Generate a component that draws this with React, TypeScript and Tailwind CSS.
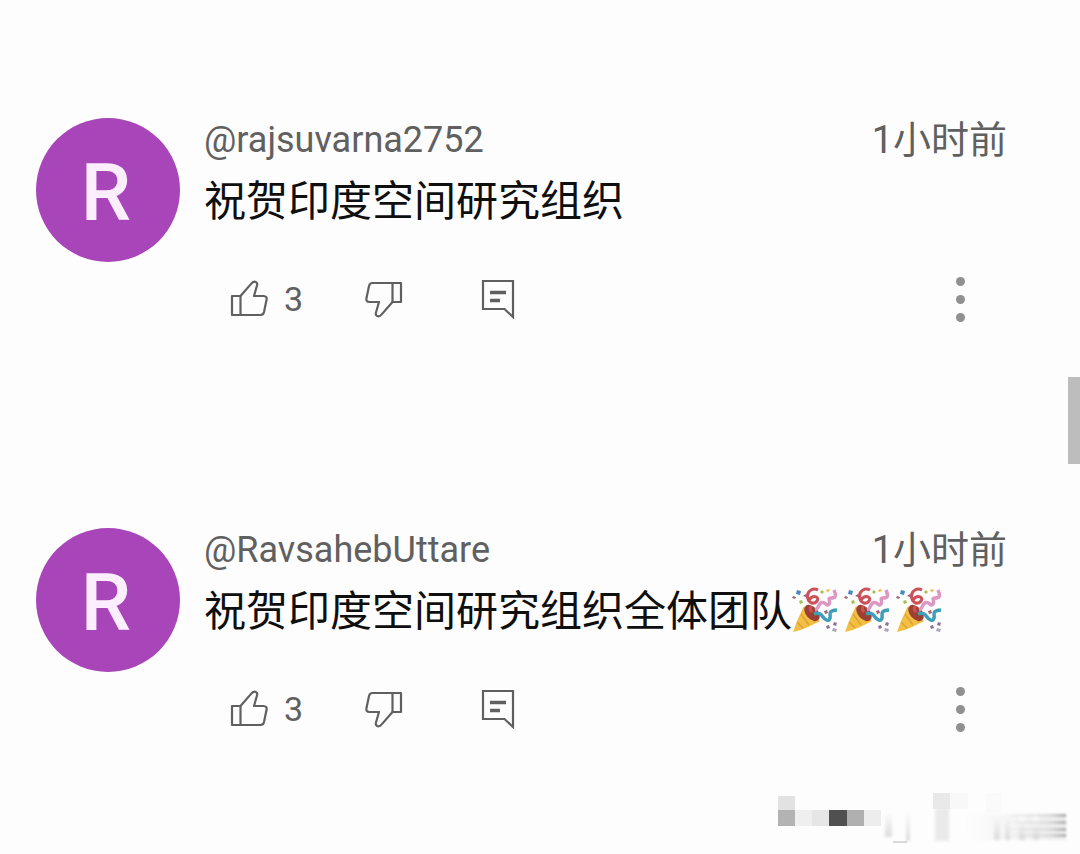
import React, { useState } from 'react';

interface Comment {
  id: number;
  author: string;
  text: string;
  cheers: number;
  time: string;
  likes: number;
}

const comments: Comment[] = [
  {
    id: 1,
    author: '@rajsuvarna2752',
    text: '祝贺印度空间研究组织',
    cheers: 0,
    time: '1小时前',
    likes: 3
  },
  {
    id: 2,
    author: '@RavsahebUttare',
    text: '祝贺印度空间研究组织全体团队',
    cheers: 3,
    time: '1小时前',
    likes: 3
  }
];

const ThumbIcon: React.FC<{ className?: string }> = ({ className = '' }) => (
  <svg
    viewBox="0 0 38 38"
    className={`h-[38px] w-[38px] ${className}`}
    fill="none"
    stroke="currentColor"
    strokeWidth="2.2"
    strokeLinejoin="round"
  >
    <path d="M2 16H10.500V35H2z" />
    <path d="M10.500 16 21.300 3.600Q23.500 1 25.800 1.900 27.800 2.800 27 5.500L24 16H33.500Q37.200 16.300 36.600 19.500L34 32Q33.300 35 30.500 35H10.500" />
  </svg>
);

const ReplyIcon: React.FC = () => (
  <svg viewBox="0 0 34 40" className="h-10 w-[34px]" fill="none" stroke="currentColor" strokeWidth="2.2">
    <path d="M2 2H32V38L23.500 30H2Z" />
    <path d="M9 13.500H25M9 21.500H19" strokeWidth="3.500" />
  </svg>
);

const PartyPopper: React.FC = () => (
  <svg viewBox="0 0 46 46" className="h-[46px] w-[46px]" role="img" aria-label="🎉" fill="none">
    <path d="M12 19C8 27 4 36 1 45 10 43 19 39 28 34Z" fill="#f2bf45" />
    <path d="M9 27l8 11M5 35l6 6M12 21l11 14" stroke="#dfa236" strokeWidth="1.500" />
    <ellipse cx="20" cy="26" rx="6" ry="9.500" transform="rotate(-42 20 26)" fill="#9c4034" />
    <path d="M26 3C21 0 15 4 15.500 10S22 18 25 14 21 7 17 13" stroke="#cb5259" strokeWidth="3" />
    <path d="M20 25C18 23 18 21 19 19" stroke="#cb5259" strokeWidth="3" />
    <path d="M23 23C27 22 26 16 30 15.500S35 20 37 17 35 11 39 11 45 10 42 3" stroke="#dc97c3" strokeWidth="3.500" />
    <path d="M22 27C27 25 29 27 31 30S37 35 38 31 35 24 45 23" stroke="#3f9fba" strokeWidth="3.500" />
    <path d="M5 3l4 1-1 4-4-1z" fill="#4b88bd" />
    <path d="M1 9l3 1-1 2-3-1zM32 24l3-1 1 3-3 1z" fill="#a6636c" />
    <path d="M7 14l3-1 1 3-3 1zM28 5l2-2 2 2-2 2z" fill="#a8bd55" />
    <path d="M11 9l3-2v3z" fill="#865aa0" />
    <path d="M34 3l3-1 1 2-3 1z" fill="#e5c04c" />
    <path d="M34 39l3-1 1 3-3 1zM42 35l3 1-1 3-3-1z" fill="#8d7295" />
    <path d="M41 41l4 1-1 3-4-1z" fill="#b0a3bb" />
  </svg>
);

const CommentRow: React.FC<{ comment: Comment }> = ({ comment }) => {
  const [likes, setLikes] = useState(comment.likes);

  return (
    <li className="flex items-start gap-6">
      <div className="flex h-36 w-36 shrink-0 items-center justify-center rounded-full bg-[#a846b9] pt-1.5 pr-1 text-[80px] leading-none font-medium text-[#fdeeff]">
        R
      </div>
      <div className="min-w-0 flex-1">
        <div className="flex items-center justify-between leading-[44px] text-[#606060]">
          <a href="#author" className="text-[36px] leading-[42px]">{comment.author}</a>
          <time className="text-[38px]">{comment.time}</time>
        </div>
        <p className="mt-[10px] flex items-center text-[42px] leading-[60px] text-[#0f0f0f]">
          {comment.text}
          {comment.cheers > 0 && (
            <span className="flex gap-[6px] pb-1">
              {Array.from({ length: comment.cheers }, (_, i) => (
                <PartyPopper key={i} />
              ))}
            </span>
          )}
        </p>
        <div className="mt-[42px] flex items-center pr-9 pl-[26px] text-[#606060]">
          <button
            type="button"
            aria-label="Like"
            onClick={() => setLikes(likes + 1)}
            className="flex w-[135px] items-center gap-4 text-[34px] leading-[50px]"
          >
            <ThumbIcon />
            <span>{likes}</span>
          </button>
          <button type="button" aria-label="Dislike" className="mr-[78px]">
            <ThumbIcon className="rotate-180" />
          </button>
          <button type="button" aria-label="Reply">
            <ReplyIcon />
          </button>
          <button
            type="button"
            aria-label="More"
            className="ml-auto flex w-[22px] flex-col items-center gap-[9px]"
          >
            <span className="h-[9px] w-[9px] rounded-full bg-[#909090]" />
            <span className="h-[9px] w-[9px] rounded-full bg-[#909090]" />
            <span className="h-[9px] w-[9px] rounded-full bg-[#909090]" />
          </button>
        </div>
      </div>
    </li>
  );
};

// Pixelated strip that covers the account name
const MosaicStrip: React.FC = () => (
  <svg viewBox="0 0 300 54" className="h-[54px] w-[300px]" aria-hidden="true">
    <defs>
      <linearGradient id="fade" x1="0" x2="1" y1="0" y2="0">
        <stop offset="0" stopColor="#fdfdfd" />
        <stop offset="1" stopColor="#ebebeb" />
      </linearGradient>
      <linearGradient id="streak" gradientUnits="userSpaceOnUse" x1="225" x2="290" y1="0" y2="0">
        <stop offset="0" stopColor="#b8b8b8" stopOpacity="0" />
        <stop offset="0.7" stopColor="#b8b8b8" stopOpacity="0.3" />
        <stop offset="1" stopColor="#a8a8a8" />
      </linearGradient>
      <linearGradient id="bar" x1="0" x2="0" y1="0" y2="1">
        <stop offset="0" stopColor="#fdfdfd" />
        <stop offset="1" stopColor="#dcdcdc" />
      </linearGradient>
      <filter id="soft" x="-10%" y="-20%" width="120%" height="140%">
        <feGaussianBlur stdDeviation="1.5" />
      </filter>
      <filter id="light" x="-10%" y="-20%" width="120%" height="140%">
        <feGaussianBlur stdDeviation="0.8" />
      </filter>
    </defs>
    <rect x="0" y="4" width="17" height="14" fill="#e2e2e2" />
    <rect x="0" y="18" width="17" height="16" fill="#b3b3b3" />
    <rect x="17" y="18" width="17" height="16" fill="#efefef" />
    <rect x="34" y="18" width="17" height="16" fill="#e6e6e6" />
    <rect x="51" y="18" width="18" height="16" fill="#505050" />
    <rect x="69" y="18" width="17" height="16" fill="#b0b0b0" />
    <rect x="86" y="18" width="17" height="16" fill="#ededed" />
    <rect x="155" y="1" width="17" height="16" fill="#e9e9e9" />
    <rect x="172" y="1" width="18" height="16" fill="#f8f8f8" />
    <rect x="208" y="1" width="15" height="20" fill="#fafafa" />
    <g filter="url(#soft)">
      <rect x="157" y="16" width="14" height="33" fill="#eaeaea" />
      <rect x="188" y="22" width="100" height="26" fill="url(#fade)" />
      <rect x="107" y="20" width="7" height="25" fill="url(#bar)" />
      <rect x="128" y="18" width="4" height="31" fill="url(#bar)" />
      <rect x="216" y="20" width="6" height="28" fill="url(#bar)" />
      <rect x="227" y="20" width="5" height="28" fill="url(#bar)" />
      <rect x="241" y="24" width="6" height="24" fill="url(#bar)" />
      <rect x="255" y="24" width="6" height="24" fill="url(#bar)" />
    </g>
    <path d="M115 50h14" stroke="#b5b5b5" strokeWidth="1" />
    <g fill="url(#streak)" filter="url(#light)">
      <rect x="225" y="22" width="63" height="3" />
      <rect x="225" y="29" width="63" height="3" />
      <rect x="225" y="36" width="63" height="3" />
      <rect x="225" y="42" width="63" height="3" />
    </g>
  </svg>
);

export default function App() {
  return (
    <main className="relative min-h-screen bg-[#fdfdfd] pt-[118px] font-['Roboto','Noto_Sans_CJK_SC',sans-serif]">
      <ul className="flex flex-col gap-[204px] pr-[73px] pl-9">
        {comments.map(comment => (
          <CommentRow key={comment.id} comment={comment} />
        ))}
      </ul>
      <div className="mt-[58px] flex justify-end pr-[2px]">
        <MosaicStrip />
      </div>
      <div className="absolute top-[377px] right-0 h-[87px] w-3 bg-[#bdbdbd]" />
    </main>
  );
}
